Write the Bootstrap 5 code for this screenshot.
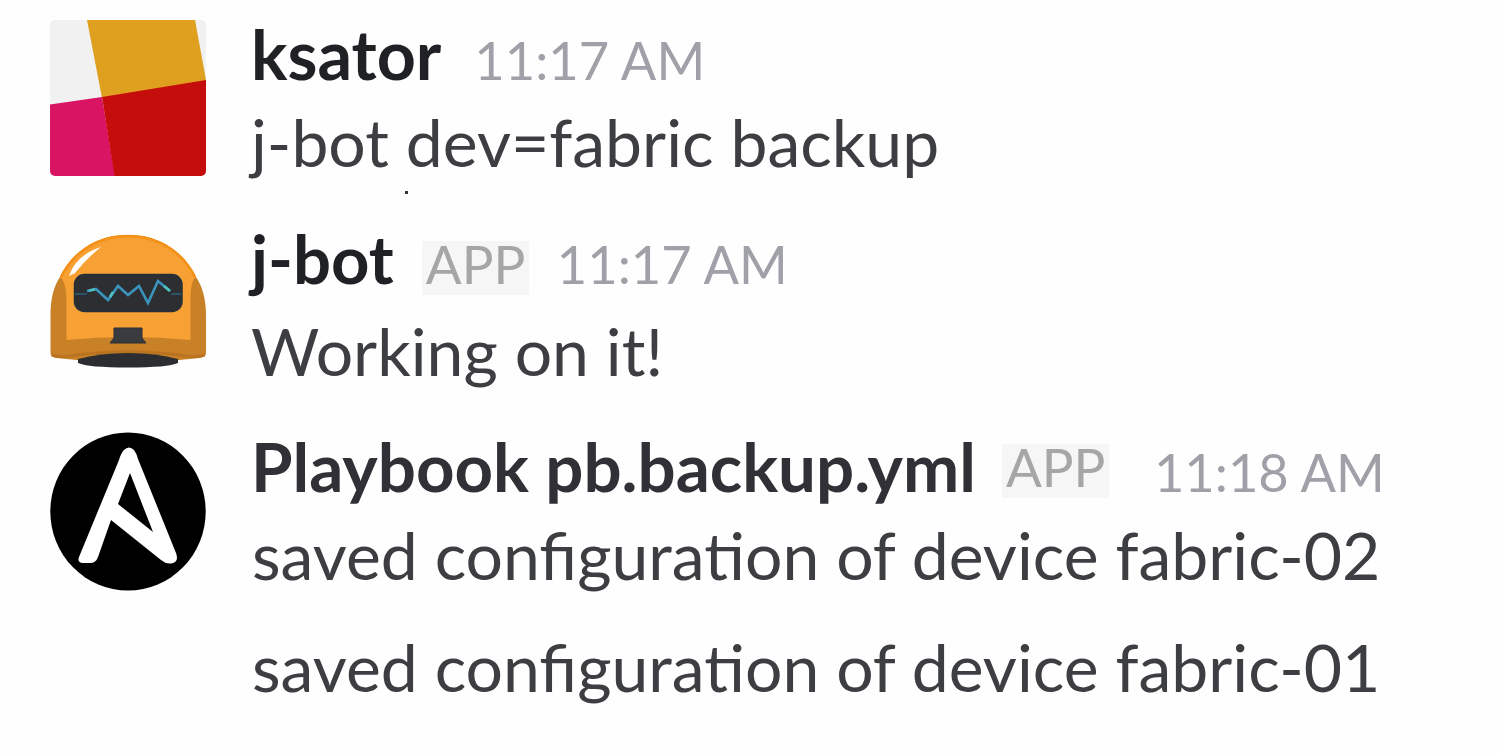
<!DOCTYPE html>
<html lang="en">
<head>
<meta charset="utf-8">
<meta name="viewport" content="width=device-width, initial-scale=1">
<title>Chat</title>
<link rel="stylesheet" href="https://cdn.jsdelivr.net/npm/bootstrap@5.3.0/dist/css/bootstrap.min.css">
<style>
  body { font-family: Lato, sans-serif; background: #fefefe; color: #2c2d30; overflow: hidden; }
  .chat-log { padding-left: 46px; }
  .chat-msg { gap: 41px; }
  .avatar { width: 164px; flex: none; }
  .avatar svg { display: block; width: 164px; }
  .msg-head { height: 80px; }
  .author { font-weight: 700; line-height: 80px; }
  .stamp { font-size: 52.5px; line-height: 1; color: #a0a0a9; }
  .app-tag { font-size: 53px; line-height: 45px; padding: 0 5px 9px 4px; background: #f6f6f6; color: #a6a6a6; width: 107px; height: 54px; }
  .msg-line { font-size: 66.05px; line-height: 96px; color: #3d3e41; }
  .first { height: 204px; padding-top: 14px; }
  .second { height: 208px; padding-top: 14px; }
  .third { padding-top: 13.6px; }
  .first .avatar { margin-top: 2px; }
  .second .avatar { margin-top: 13px; }
  .third .avatar { margin-top: 2.4px; }
  .first .author { font-size: 68.2px; color: #1f2124; margin-right: 33px; }
  .second .author { font-size: 67px; color: #1f2124; margin-right: 28px; }
  .third .author { font-size: 67.2px; color: #303036; margin-right: 26px; }
  .second .app-tag { margin: 22.7px 28px 0 0; }
  .third .app-tag { margin: 18.6px 45px 0 0; }
  .second .msg-line { margin-top: 5px; }
  .third .msg-line { margin-top: 1px; padding-left: 1px; }
  .third .msg-line + .msg-line { margin-top: 16px; }
  .speck { width: 3px; height: 3px; left: 359px; top: 191px; background: #333; }
</style>
<script src="https://cdn.jsdelivr.net/npm/bootstrap@5.3.0/dist/js/bootstrap.bundle.min.js"></script>
</head>
<body>
<main class="chat-log text-nowrap">
  <article class="chat-msg first d-flex position-relative">
    <div class="avatar">
      <svg viewBox="46 16 164 164" aria-hidden="true">
        <defs><clipPath id="tile"><rect x="50" y="20" width="156" height="156" rx="5"/></clipPath></defs>
        <g clip-path="url(#tile)">
          <rect x="50" y="20" width="156" height="156" fill="#f1f1f2"/>
          <path d="M87 20H195L206 80V82L102 98Z" fill="#dfa01f"/>
          <path d="M50 104.500L102 97L115 176H50Z" fill="#d91463"/>
          <path d="M102 97L206 80V176H114.500Z" fill="#c50e0c"/>
        </g>
      </svg>
    </div>
    <div>
      <div class="msg-head d-flex align-items-baseline">
        <span class="author">ksator</span><span class="stamp">11:17 AM</span>
      </div>
      <div class="msg-line">j-bot dev=fabric backup</div>
    </div>
    <i class="speck position-absolute"></i>
  </article>

  <article class="chat-msg second d-flex">
    <div class="avatar">
      <svg viewBox="46 231 164 142" aria-hidden="true">
        <path d="M60 277C70 256 92 235 128 235S186 256 196 277C202 286 206 298 206 315V353Q206 357 200 358Q164 362 128 362T56 358Q50.500 357 50.500 353V315C50.500 298 54 286 60 277Z" fill="#c98127"/>
        <path d="M60 277C70 256 92 235 128 235S186 256 196 277C191 280 190.500 292 190.500 300V340Q128 334 66.500 340V300C66.500 292 65 280 60 277Z" fill="#f7a033"/>
        <path d="M61 277C71 257 93 236 128 236S185 257 195 277" fill="none" stroke="#f39118" stroke-width="2.500"/>
        <path d="M51.500 355Q60 358 80 354.500Q128 349 176 354.500Q196 358 205 355" fill="none" stroke="#a9661b" stroke-width="3" opacity=".5"/>
        <path d="M78 359Q100 353 128 353T178 359V363Q168 367.500 128 367.500T78 363Z" fill="#2b2d30"/>
        <path d="M69 276Q76 255 101 247Q86 259 75 273Z" fill="#fff"/>
        <rect x="74.500" y="274.500" width="107.500" height="37" rx="10" fill="#2d2e32" stroke="#26303b" stroke-width="1.500"/>
        <path d="M75 294H87M171 294H181" fill="none" stroke="#2b5268" stroke-width="2"/>
        <path d="M87 291L96 289L108 300L118 286L128 295L139 286L148 303L158 281L170 291" fill="none" stroke="#3a94bd" stroke-width="2.600"/>
        <path d="M89 290.500L95 289.500M110 297L113 292M164 286L170 291" fill="none" stroke="#4fc1bd" stroke-width="2.600"/>
        <path d="M114 328H142V338L146 343H110L114 338Z" fill="#3a3b3f" stroke="#2a3038" stroke-width="1"/>
      </svg>
    </div>
    <div>
      <div class="msg-head d-flex align-items-baseline">
        <span class="author">j-bot</span><span class="app-tag align-self-start">APP</span><span class="stamp">11:17 AM</span>
      </div>
      <div class="msg-line">Working on it!</div>
    </div>
  </article>

  <article class="chat-msg third d-flex">
    <div class="avatar">
      <svg viewBox="46 428 164 168" aria-hidden="true">
        <ellipse cx="128" cy="511.500" rx="77.700" ry="79" fill="#000"/>
        <path d="M124 450Q129 445 134 450Q137 454 138 459L176 553Q179 561 173 563Q167 565 161 560L111 520L98 557Q96 563 90 563H82Q77 562 79 557L119 460Q121 453 124 450ZM130 473L118 504L153 532Z" fill="#fff" fill-rule="evenodd"/>
      </svg>
    </div>
    <div>
      <div class="msg-head d-flex align-items-baseline">
        <span class="author">Playbook pb.backup.yml</span><span class="app-tag align-self-start">APP</span><span class="stamp">11:18 AM</span>
      </div>
      <div class="msg-line">saved configuration of device fabric-02</div>
      <div class="msg-line">saved configuration of device fabric-01</div>
    </div>
  </article>
</main>
</body>
</html>
